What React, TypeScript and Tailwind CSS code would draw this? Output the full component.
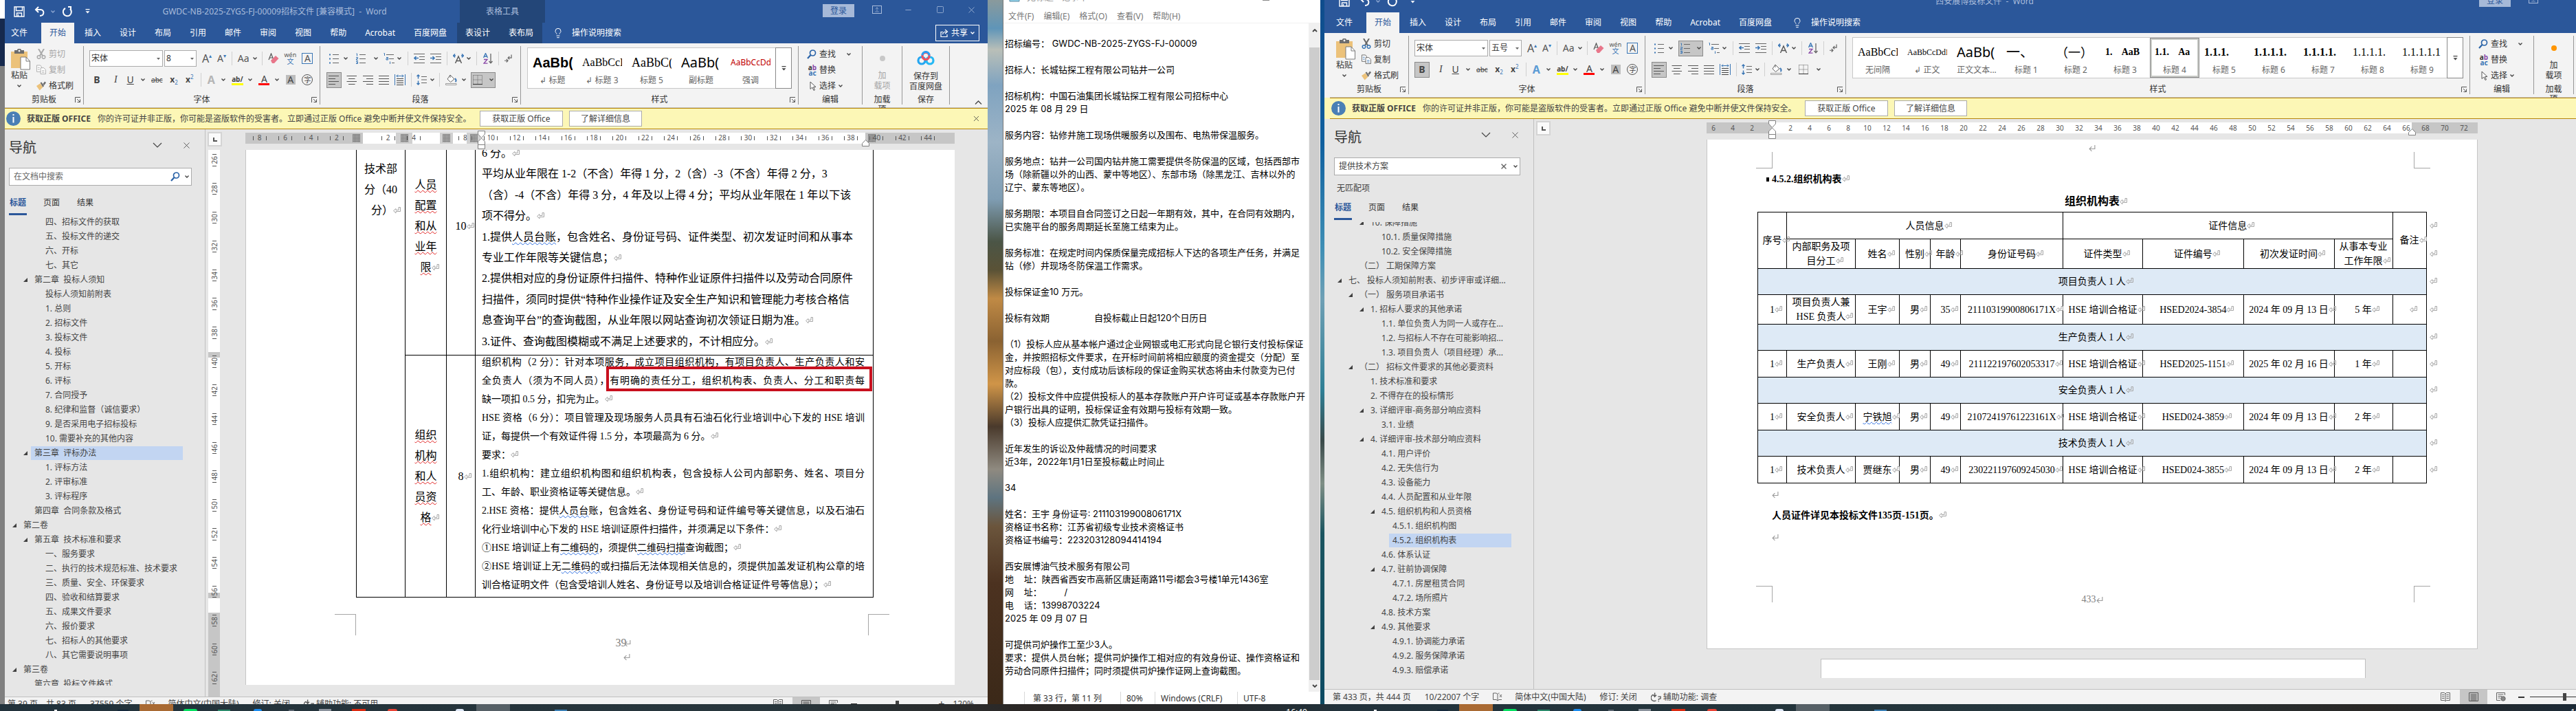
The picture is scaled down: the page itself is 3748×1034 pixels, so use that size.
import React from "react";
import { ArrowUpFromLine, Lightbulb, Minus, Square, X } from "lucide-react";

const UI = "font-['Noto_Sans','Noto_Sans_CJK_SC',sans-serif]";
const SONG = "font-['Liberation_Serif','Noto_Sans_CJK_SC',serif]";

/* ---------- small drawings ---------- */

const Chev = ({ className = "text-[#444]" }: { className?: string }) => (
  <svg viewBox="0 0 6 4" className={`h-1 w-1.5 shrink-0 ${className}`} fill="none" stroke="currentColor" strokeWidth="1.4">
    <path d="M0.5 0.5 L3 3 L5.5 0.5" />
  </svg>
);

const Tri = () => (
  <svg viewBox="0 0 6 6" className="h-1.5 w-1.5" fill="#404040">
    <path d="M6 0 V6 H0 Z" />
  </svg>
);

const Mark = ({ className = "" }: { className?: string }) => (
  <span className={`inline-block w-0 overflow-visible whitespace-nowrap ${className}`}>
    <svg viewBox="0 0 11 10" className="inline-block h-2.5 w-[11px] max-w-none align-baseline" fill="none" stroke="#a6a6a6" strokeWidth="1">
      <path d="M8 0.5 H10.5 V6.5 H4 V9 L0.5 5.5 L4 2.5 V4.5 H8 Z" />
    </svg>
  </span>
);

const SmallMark = () => (
  <svg viewBox="0 0 9 9" className="inline-block h-2.5 w-2.5" fill="none" stroke="#9a9a9a" strokeWidth="1">
    <path d="M8 0 V5 H1 M4 2 L1 5 L4 8" />
  </svg>
);

const Launcher = () => (
  <svg viewBox="0 0 8 8" className="h-2 w-2" fill="none" stroke="#555" strokeWidth="1">
    <path d="M0.5 8 V0.5 H8 M3 3 L7 7 M7.5 3.5 V7.5 H3.5" />
  </svg>
);

const SaveIcon = () => (
  <svg viewBox="0 0 16 16" className="h-4 w-4" fill="none" stroke="#fff" strokeWidth="1.4">
    <path d="M1 1 H15 V15 H1 Z M3.5 1 V6.5 H12.5 V1 M4.5 15 V10 H11.5 V15 M6.5 12 V15" />
  </svg>
);
const UndoIcon = () => (
  <svg viewBox="0 0 16 16" className="h-4 w-4" fill="none" stroke="#fff" strokeWidth="2">
    <path d="M6 1 L2 5 L6 9 M2 5 H9 C15 5 15 14 8 14" />
  </svg>
);
const RedoIcon = () => (
  <svg viewBox="0 0 16 16" className="h-4 w-4" fill="none" stroke="#fff" strokeWidth="2">
    <path d="M5 3 A6 6 0 1 0 12 4 M9 1 H13 V6" />
  </svg>
);
const MoreIcon = ({ color = "#fff" }: { color?: string }) => (
  <svg viewBox="0 0 7 7" className="h-[7px] w-[7px]" fill={color}>
    <path d="M0.5 0 H6.5 V1.2 H0.5 Z M0.5 3.2 H6.5 L3.5 6.5 Z" />
  </svg>
);

const PasteIcon = () => (
  <svg viewBox="0 0 28 31" className="h-[31px] w-7">
    <path d="M0 4 H24 V28 H0 Z" fill="#ecc27a" />
    <path d="M5 2 H9 C9 -1 15 -1 15 2 H19 V7 H5 Z" fill="#6d6d6d" />
    <circle cx="12" cy="3" r="1.4" fill="#f3f3f3" />
    <path d="M14 12 H22 L27.5 18 V30 H14 Z" fill="#fff" stroke="#7a7a7a" />
    <path d="M22 12 V18 H27.5" fill="none" stroke="#7a7a7a" />
  </svg>
);
const CutIcon = ({ c, h }: { c: string; h: string }) => (
  <svg viewBox="0 0 14 15" className="h-[15px] w-3.5" fill="none" strokeWidth="1.5">
    <path d="M3 0 L9 10 M11 0 L5 10" stroke={c} strokeWidth="2" />
    <circle cx="3.5" cy="12" r="2.3" stroke={h} />
    <circle cx="10.5" cy="12" r="2.3" stroke={h} />
  </svg>
);
const CopyIcon = ({ c, h }: { c: string; h: string }) => (
  <svg viewBox="0 0 15 15" className="h-[15px] w-3.5" fill="#fff" stroke={c}>
    <path d="M0.5 0.5 H6 L8 3 V10.5 H0.5 Z" />
    <path d="M6.5 4.5 H11.5 L14.5 7.5 V14 H6.5 Z" />
    <path d="M8.5 9 H12.5 M8.5 11.5 H12.5 M2 4 H5 M2 7 H5" stroke={h} />
  </svg>
);
const BrushIcon = () => (
  <svg viewBox="0 0 15 14" className="h-3.5 w-3.5">
    <path d="M0 7 L6 3 L10 9 L5 14 Z" fill="#ecc27a" />
    <path d="M6 2 L8 1 L12 7 L10 9 Z" fill="#6d6d6d" />
    <path d="M10 4 L13 0 L15 2 L12 6 Z" fill="#6d6d6d" />
  </svg>
);
const EraserIcon = () => (
  <svg viewBox="0 0 16 16" className="h-4 w-4">
    <path d="M1 10 L4.5 1 L8 10 M2.2 7 H6.8" fill="none" stroke="#555" strokeWidth="1.2" />
    <path d="M4 11 L11 4 L15.5 8 L9 15 H6 Z" fill="#e8768a" />
  </svg>
);
const ListIcon = ({ kind }: { kind: "bullet" | "number" | "multi" }) => (
  <svg viewBox="0 0 16 16" className="h-4 w-4 shrink-0" stroke="#666" fill="#3a76b5">
    {kind === "bullet" && (
      <>
        <path d="M5 2.5 H14 M5 8.5 H14 M5 14.5 H14" />
        <path d="M0 1.5 H2 V3.5 H0 Z M0 7.5 H2 V9.5 H0 Z M0 13.5 H2 V15.5 H0 Z" stroke="none" />
      </>
    )}
    {kind === "number" && (
      <>
        <path d="M5 2.5 H14 M5 8.5 H14 M5 14.5 H14" />
        <path d="M0.5 1 H1.5 V4.5 M0 6.5 H2.5 V8.5 H0.5 V10.5 H3 M0 12.5 H2.5 V15.5 H0 M0.5 14 H2.5" fill="none" stroke="#3a76b5" />
      </>
    )}
    {kind === "multi" && (
      <>
        <path d="M4 2.5 H15 M8 8.5 H15 M12 14.5 H16" />
        <path d="M0.5 0.5 H1.5 V4 M4 6.5 H6.5 V10 H4 V8 H6 M9.5 12.5 V16" fill="none" stroke="#3a76b5" />
      </>
    )}
  </svg>
);
const IndentIcon = ({ out }: { out?: boolean }) => (
  <svg viewBox="0 0 16 14" className="h-3.5 w-4" stroke="#666" fill="none">
    <path d="M0 0.5 H16 M8 4.5 H16 M8 8.5 H16 M0 13.5 H16" />
    <path d={out ? "M7 6.5 H1 M3.5 4 L1 6.5 L3.5 9" : "M0 6.5 H6 M3.5 4 L6 6.5 L3.5 9"} stroke="#3a76b5" strokeWidth="1.6" />
  </svg>
);
const AsianIcon = () => (
  <svg viewBox="0 0 16 14" className="h-3.5 w-4 shrink-0" fill="none" stroke="#555" strokeWidth="1.4">
    <path d="M3.5 14 L8 4 L12.5 14 M5.5 10.5 H10.5" />
    <path d="M3 0.5 L0.5 3 L3 5.5 M0.5 3 H4 M13 0.5 L15.5 3 L13 5.5 M15.5 3 H12" stroke="#3a76b5" />
  </svg>
);
const SortIcon = () => (
  <svg viewBox="0 0 14 16" className="h-4 w-3.5" fill="none" strokeWidth="1.3">
    <path d="M0.5 7 L3.5 0.5 L6.5 7 M1.5 5 H5.5" stroke="#3a76b5" />
    <path d="M1 9.5 H6 L1 15.2 H6.5" stroke="#8a4aa8" />
    <path d="M11 1 V14.5 M8.5 12 L11 14.8 L13.5 12" stroke="#666" />
  </svg>
);
const ShowMarksIcon = () => (
  <svg viewBox="0 0 12 13" className="h-[13px] w-[11px]" fill="none" stroke="#666" strokeWidth="1.3">
    <path d="M11 0 V5 H6 M8 2.5 L5.5 5 L8 7.5 M0 9.5 H5 M3 7 L5.5 9.5 L3 12" />
  </svg>
);
const AlignIcon = ({ kind }: { kind: "l" | "c" | "r" | "j" }) => {
  const d = {
    l: "M0 0.5 H15 M0 4.5 H10 M0 8.5 H15 M0 12.5 H10",
    c: "M0.5 0.5 H15 M3 4.5 H12.5 M0.5 8.5 H15 M3 12.5 H12.5",
    r: "M0 0.5 H15 M5 4.5 H15 M0 8.5 H15 M5 12.5 H15",
    j: "M0 0.5 H15 M0 4.5 H15 M0 8.5 H15 M0 12.5 H15",
  }[kind];
  return (
    <svg viewBox="0 0 16 13" className="h-[13px] w-4" stroke="#555" fill="none">
      <path d={d} />
    </svg>
  );
};
const DistributeIcon = () => (
  <svg viewBox="0 0 16 16" className="h-4 w-4" fill="none" stroke="#444">
    <path d="M3 6.5 H13 M3 9.5 H13 M3 12.5 H13 M3 15.5 H13" />
    <path d="M0.5 0 V16 M15.5 0 V16 M3 2.5 H13 M5 0.5 L3 2.5 L5 4.5 M11 0.5 L13 2.5 L11 4.5" stroke="#3a76b5" />
  </svg>
);
const SpacingIcon = () => (
  <svg viewBox="0 0 15 16" className="h-4 w-[15px]" fill="none" stroke="#666">
    <path d="M7 3.5 H15 M7 8 H15 M7 12.5 H15" />
    <path d="M2.5 1 V6.5 M2.5 9.5 V15 M0.5 3 L2.5 1 L4.5 3 M0.5 13 L2.5 15 L4.5 13" stroke="#3a76b5" strokeWidth="1.4" />
  </svg>
);
const ShadeIcon = () => (
  <svg viewBox="0 0 17 16" className="h-4 w-[17px]" fill="none" stroke="#666">
    <path d="M7 1 L13 7 L7.5 11.5 L3 7 Z M7 1 V5" fill="#fff" />
    <path d="M14 6 C16 8 16 10 14.5 11" stroke="#3a76b5" strokeWidth="2" />
    <path d="M0.5 13.5 H16 V15.5 H0.5 Z" fill="#fff" stroke="#999" />
  </svg>
);
const BorderIcon = () => (
  <svg viewBox="0 0 14 14" className="h-3.5 w-3.5" fill="none" stroke="#666">
    <path d="M0.5 0.5 H13.5 V13.5 M0.5 0.5 V13.5 M7 0.5 V13 M0.5 7 H13" strokeDasharray="1 1" />
    <path d="M0 13.5 H14" stroke="#333" />
  </svg>
);
const FindIcon = ({ className = "h-3.5 w-3.5" }: { className?: string }) => (
  <svg viewBox="0 0 14 14" className={className} fill="none" stroke="#2b64a8" strokeWidth="1.7">
    <circle cx="8.5" cy="5" r="4" />
    <path d="M5.5 8 L1 13" strokeWidth="2.2" />
  </svg>
);
const CursorIcon = () => (
  <svg viewBox="0 0 10 14" className="ml-1 h-3.5 w-2.5" fill="#fff" stroke="#555">
    <path d="M1 1 V11.5 L3.8 9 L6 13.5 L7.5 12.8 L5.5 8.5 H9 Z" />
  </svg>
);
const NetdiskIcon = () => (
  <svg viewBox="0 0 26 21" className="h-[21px] w-[26px]" fill="none" strokeWidth="3.2">
    <circle cx="7" cy="14" r="5" stroke="#25a6f0" />
    <circle cx="19" cy="14" r="5" stroke="#25b8f4" />
    <circle cx="13" cy="7.5" r="5" stroke="#ef4f5f" />
    <path d="M8 6.5 A5 5 0 0 1 18 6.5" stroke="#2a9df4" />
  </svg>
);
const InfoIcon = () => (
  <svg viewBox="0 0 21 21" className="h-[21px] w-[21px] shrink-0">
    <circle cx="10.5" cy="10.5" r="10.5" fill="#4a7fb5" />
    <path d="M9.5 4 H11.5 V6 H9.5 Z M9.5 8 H11.5 V16.5 H9.5 Z" fill="#fff" />
  </svg>
);
const ShareIcon = () => (
  <svg viewBox="0 0 12 12" className="h-3 w-3" fill="none" stroke="#fff" strokeWidth="1.2">
    <path d="M4 4.5 H1 V11.5 H10 V8 M3.5 8 C4 5 6 4 9 4 M7 1 L10.5 4 L7 7" />
  </svg>
);
const BookIcon = () => (
  <svg viewBox="0 0 14 13" className="h-[13px] w-3.5" fill="none" stroke="#666">
    <path d="M0.5 1 H5 L7 2.5 V12 L5 10.5 H0.5 Z M7 2.5 L8.5 1 H9.5 M7 12 L9 10.5 H13 M10 3 L13 7 M13 3 L10 7" />
  </svg>
);
const AccessIcon = () => (
  <svg viewBox="0 0 17 14" className="h-3.5 w-4" fill="none" stroke="#555" strokeWidth="1.4">
    <path d="M4 3 A5 5 0 1 0 8 12 M6 0 V6 L8.5 3.5 M6 6 L3.5 3.5 M11 6 H15 V9 L12 10 V11.5 M12 12.5 V14" />
  </svg>
);
const ReadIcon = () => (
  <svg viewBox="0 0 14 14" className="h-3.5 w-3.5" fill="none" stroke="#666">
    <path d="M0.5 0.5 H5.5 L7 2 L8.5 0.5 H13.5 V11.5 H8.5 L7 13 L5.5 11.5 H0.5 Z M7 2 V13 M2 3.5 H5.5 M2 6 H5.5 M2 8.5 H5.5 M8.5 3.5 H12 M8.5 6 H12 M8.5 8.5 H12" />
  </svg>
);
const PrintIcon = () => (
  <svg viewBox="0 0 14 13" className="h-[13px] w-3.5" fill="none" stroke="#555">
    <path d="M0.5 0.5 H13.5 V12.5 H0.5 Z M2.5 3 H11.5 M2.5 5 H11.5 M2.5 7 H11.5 M2.5 9 H11.5 M2.5 11 H11.5" />
  </svg>
);
const WebIcon = () => (
  <svg viewBox="0 0 14 13" className="h-[13px] w-3.5" fill="none" stroke="#666">
    <path d="M12.5 4 V0.5 H0.5 V11.5 H6 M2.5 3 H10.5 M2.5 5.5 H8 M2.5 8 H6" />
    <circle cx="10" cy="9" r="3.2" fill="#8a8a8a" />
  </svg>
);
const Hatch = () => (
  <svg viewBox="0 0 11 12" className="h-3 w-[11px]" stroke="#555" strokeWidth="1">
    <path d="M0 0.5 H11 M0 2.5 H11 M0 4.5 H11 M0 6.5 H11 M0 8.5 H11 M0 10.5 H11 M0.5 0 V12 M2.5 0 V12 M4.5 0 V12 M6.5 0 V12 M8.5 0 V12 M10.5 0 V12" opacity="0.6" />
  </svg>
);
const IndentMarker = () => (
  <svg viewBox="0 0 11 27" className="h-[27px] w-[11px]" fill="#fff" stroke="#808080">
    <path d="M0.5 0.5 H10.5 V5 L5.5 10.5 L0.5 5 Z M5.5 11 L10.5 16 V20.5 H0.5 V16 Z M0.5 20.5 H10.5 V26.5 H0.5 Z" />
  </svg>
);
const RightMarker = () => (
  <svg viewBox="0 0 11 10" className="h-2.5 w-[11px]" fill="#fff" stroke="#808080">
    <path d="M5.5 0.5 L10.5 5.5 V9.5 H0.5 V5.5 Z" />
  </svg>
);

/* ---------- ribbon ---------- */

const Sep = () => <span className="h-5 w-px shrink-0 bg-[#d0d0d0]" />;

const Tool = ({ label, w, on, chev, children }: { label: string; w: string; on?: boolean; chev?: boolean; children: React.ReactNode }) => (
  <button
    aria-label={label}
    className={`flex h-[23px] shrink-0 items-center ${w} ${chev ? "justify-between" : "justify-center"} ${
      on ? "border border-[#8a8a8a] bg-[#c6c6c6] px-0.5" : ""
    }`}
  >
    {children}
    {chev && <Chev />}
  </button>
);

const Group = ({ label, w, launcher, children }: { label: string; w: string; launcher?: boolean; children: React.ReactNode }) => (
  <section className={`my-1 flex shrink-0 flex-col border-r border-[#979797] ${w}`}>
    <div className="flex-1">{children}</div>
    <div className="grid h-3.5 grid-cols-[12px_1fr_12px] items-center">
      <span />
      <span className="text-center leading-[14px] text-[#333]">{label}</span>
      {launcher && (
        <button aria-label={`${label}设置`}>
          <Launcher />
        </button>
      )}
    </div>
  </section>
);

type StyleItem = { sample: string; name: string; cls: string; on?: boolean };
type WordProps = {
  title: string;
  context?: boolean;
  clipped?: boolean;
  size: string;
  styles: StyleItem[];
  children: React.ReactNode;
};

const TABS = ["插入", "设计", "布局", "引用", "邮件", "审阅", "视图", "帮助", "Acrobat", "百度网盘"];

function TitleBar({ title, context, clipped }: { title: string; context?: boolean; clipped?: boolean }) {
  return (
    <header className="flex h-[33px] shrink-0 overflow-hidden text-[#a9bcdb]">
      <div className="flex w-[123px] shrink-0 items-center pl-[13px]">
        <button aria-label="保存"><SaveIcon /></button>
        <button aria-label="撤消" className="ml-3.5"><UndoIcon /></button>
        <Chev className="ml-2 text-[#8fa8d2]" />
        <button aria-label="恢复" className="ml-2.5"><RedoIcon /></button>
        <button aria-label="自定义快速访问工具栏" className="ml-[18px]"><MoreIcon /></button>
      </div>
      <h1 className={`flex-1 self-center whitespace-pre text-center leading-4 ${clipped ? "pl-[110px]" : ""}`}>{title}</h1>
      {context && (
        <div className="mr-[404px] flex w-[124px] shrink-0 items-center justify-center bg-[#234678]">表格工具</div>
      )}
      <div className={`flex shrink-0 items-start overflow-hidden pt-1.5 ${clipped ? "w-[141px]" : "w-60"}`}>
        <button className="h-[19px] w-[46px] shrink-0 bg-[#a6b9d8] leading-[19px] text-[#2b579a]">登录</button>
        <button aria-label="功能区显示选项" className="ml-[26px] mt-0.5 flex h-3 w-3.5 shrink-0 items-center justify-center border border-[#a9bcdb]">
          <ArrowUpFromLine size={8} />
        </button>
        <button aria-label="最小化" className="ml-8 mt-0.5 shrink-0"><Minus size={13} strokeWidth={1.5} /></button>
        <button aria-label="最大化" className="ml-[34px] mt-0.5 shrink-0"><Square size={12} strokeWidth={1.5} /></button>
        <button aria-label="关闭" className="ml-8 mt-px shrink-0"><X size={15} strokeWidth={1.3} /></button>
      </div>
    </header>
  );
}

function TabBar({ context, clipped }: { context?: boolean; clipped?: boolean }) {
  return (
    <nav role="tablist" className="flex h-[30px] shrink-0 whitespace-nowrap text-white">
      <button role="tab" className="w-[53px] pl-[9px] text-left">文件</button>
      <button role="tab" aria-selected className="mr-[3px] bg-[#f3f3f3] px-3 text-[#2b579a]">开始</button>
      {TABS.map((t) => (
        <button role="tab" key={t} className="mr-[3px] px-3">{t}</button>
      ))}
      {context && (
        <div className="flex w-[124px] bg-[#234678]">
          <button role="tab" className="mr-[3px] px-3">表设计</button>
          <button role="tab" className="px-3">表布局</button>
        </div>
      )}
      <button className={`flex items-center gap-3 ${context ? "ml-[15px]" : "ml-3.5"}`}>
        <Lightbulb size={16} strokeWidth={1.5} />
        操作说明搜索
      </button>
      {!clipped && (
        <button className="ml-auto mr-3 mt-[3px] flex h-6 w-16 items-center justify-center gap-1 border border-white">
          <ShareIcon />
          共享
          <Chev className="text-white" />
        </button>
      )}
    </nav>
  );
}

function Ribbon({ clipped, size, styles }: { clipped?: boolean; size: string; styles: StyleItem[] }) {
  const dim = clipped ? "text-[#333]" : "text-[#a6a6a6]";
  const c = clipped ? "#666" : "#aaa";
  const h = clipped ? "#3a76b5" : "#aaa";
  return (
    <div className="flex h-[94px] shrink-0 border-b border-[#c8c8c8] text-[#333]">
      <Group label="剪贴板" w="w-[115px]" launcher>
        <div className="flex pl-[9px]">
          <button className="flex w-7 flex-col items-center pt-1 leading-4">
            <PasteIcon />
            <span className="mr-1">粘贴</span>
            <Chev className="mr-1 mt-[5px] text-[#444]" />
          </button>
          <div className="ml-[9px] flex flex-col">
            <button className={`flex h-[23px] items-center gap-1 ${dim}`}><CutIcon c={c} h={h} />剪切</button>
            <button className={`flex h-[23px] items-center gap-1 ${dim}`}><CopyIcon c={c} h={h} />复制</button>
            <button className="flex h-[23px] items-center gap-1"><BrushIcon />格式刷</button>
          </div>
        </div>
      </Group>

      <Group label="字体" w="w-[344px]" launcher>
        <div className="flex flex-col gap-2 pl-2 pr-[9px] pt-1.5">
          <div className="flex h-6 items-center">
            <label className="relative mr-0.5 h-6 w-[107px]">
              <select aria-label="字体" className="h-6 w-full appearance-none border border-[#ababab] bg-white pl-0.5">
                <option>宋体</option>
              </select>
              <svg viewBox="0 0 5 3" className="absolute right-1 top-[11px] h-[3px] w-[5px]" fill="#666"><path d="M0 0 H5 L2.5 3 Z" /></svg>
            </label>
            <label className="relative h-6 w-[47px]">
              <select aria-label="字号" className="h-6 w-full appearance-none border border-[#ababab] bg-white pl-0.5">
                <option>{size}</option>
              </select>
              <svg viewBox="0 0 5 3" className="absolute right-1 top-[11px] h-[3px] w-[5px]" fill="#666"><path d="M0 0 H5 L2.5 3 Z" /></svg>
            </label>
            <div className="ml-2 flex flex-1 items-center justify-between text-[#555]">
              <Tool label="增大字号" w="w-3.5"><span className="text-base">A</span><span className="-mt-2 text-[8px] text-[#3a76b5]">▴</span></Tool>
              <Tool label="减小字号" w="w-3.5"><span className="text-sm">A</span><span className="-mt-2 text-[8px] text-[#3a76b5]">▾</span></Tool>
              <Sep />
              <Tool label="更改大小写" w="w-7" chev><span className="text-sm">Aa</span></Tool>
              <Sep />
              <Tool label="清除格式" w="w-4"><EraserIcon /></Tool>
              <Tool label="拼音指南" w="w-[18px]">
                <span className="flex flex-col items-center"><span className="text-[9px] leading-[8px]">wén</span><span className="text-[10px] leading-[11px] text-[#3a76b5]">文</span></span>
              </Tool>
              <Tool label="字符边框" w="w-[17px]"><span className="flex h-4 w-4 items-center justify-center border border-[#3a76b5] text-sm leading-4">A</span></Tool>
            </div>
          </div>
          <div className="flex h-[22px] items-center justify-between text-sm text-[#444]">
            <Tool label="加粗" w="w-[22px]" on={clipped}><b>B</b></Tool>
            <Tool label="倾斜" w="w-3.5"><i className="font-['Liberation_Serif',serif]">I</i></Tool>
            <Tool label="下划线" w="w-[26px]" chev><span className="underline">U</span></Tool>
            <Tool label="删除线" w="w-[17px]"><span className="text-[10px] line-through">abc</span></Tool>
            <Tool label="下标" w="w-3.5"><b className="text-xs">x</b><span className="mt-2 text-[8px] text-[#3a76b5]">2</span></Tool>
            <Tool label="上标" w="w-[13px]"><b className="text-xs">x</b><span className="-mt-2 text-[8px] text-[#3a76b5]">2</span></Tool>
            <Sep />
            <Tool label="文本效果" w="w-[26px]" chev>
              <span className={`text-base font-bold leading-4 ${clipped ? "text-[#5b9bd5]" : "text-[#b5b5b5]"}`}>A</span>
            </Tool>
            <Tool label="突出显示" w="w-[30px]" chev>
              <span className="border-b-[3px] border-[#ffff00] text-[10px] font-bold leading-[12px]">ab/</span>
            </Tool>
            <Tool label="字体颜色" w="w-[30px]" chev><span className="w-4 border-b-[3px] border-[#ff0000] text-center leading-[12px]">A</span></Tool>
            <Tool label="字符底纹" w="w-3.5"><span className="w-3.5 bg-[#bdbdbd] text-center leading-[14px]">A</span></Tool>
            <Tool label="带圈字符" w="w-[17px]"><span className="flex h-4 w-4 items-center justify-center rounded-full border border-[#555] text-[10px] leading-[10px]">字</span></Tool>
          </div>
        </div>
      </Group>

      <Group label="段落" w="w-[292px]" launcher>
        <div className="flex flex-col gap-2 pt-1.5">
          <div className="ml-[13px] mr-3 flex h-6 items-center justify-between">
            <Tool label="项目符号" w="w-[27px]" chev><ListIcon kind="bullet" /></Tool>
            <Tool label="编号" w="w-9" chev on={clipped}>
              {clipped ? <ListIcon kind="number" /> : <span className="pl-1"><ListIcon kind="number" /></span>}
            </Tool>
            <Tool label="多级列表" w="w-[26px]" chev><ListIcon kind="multi" /></Tool>
            <Sep />
            <Tool label="减少缩进量" w="w-4"><IndentIcon out /></Tool>
            <Tool label="增加缩进量" w="w-4"><IndentIcon /></Tool>
            <Sep />
            <Tool label="中文版式" w="w-[26px]" chev><AsianIcon /></Tool>
            <Sep />
            <Tool label="排序" w="w-3.5"><SortIcon /></Tool>
            <Sep />
            <Tool label="显示编辑标记" w="w-[11px]"><ShowMarksIcon /></Tool>
          </div>
          <div className="ml-[9px] mr-9 flex h-[22px] items-center justify-between">
            <Tool label="左对齐" w="w-[22px]" on><AlignIcon kind="l" /></Tool>
            <Tool label="居中" w="w-4"><AlignIcon kind="c" /></Tool>
            <Tool label="右对齐" w="w-4"><AlignIcon kind="r" /></Tool>
            <Tool label="两端对齐" w="w-4"><AlignIcon kind="j" /></Tool>
            <Tool label="分散对齐" w="w-4"><DistributeIcon /></Tool>
            <Sep />
            <Tool label="行距" w="w-[26px]" chev><SpacingIcon /></Tool>
            <Sep />
            <Tool label="底纹" w="w-[30px]" chev><ShadeIcon /></Tool>
            <Tool label="边框" w="w-9" chev on={!clipped}>
              {clipped ? <span className="pl-1"><BorderIcon /></span> : <BorderIcon />}
            </Tool>
          </div>
        </div>
      </Group>

      <Group label="样式" w="min-w-0 shrink" launcher>
        <div className="ml-[9px] mr-[9px] mt-0.5 flex h-[60px] border border-[#c8c8c8] bg-white">
          {styles.map((s) => (
            <button
              key={s.name}
              className={`flex w-[72px] shrink-0 flex-col items-center overflow-hidden ${s.on ? "border-[3px] border-[#c9cbc7] outline outline-1 -outline-offset-1 outline-[#8a8a8a]" : "p-[3px]"}`}
            >
              <span className={`flex h-9 w-[58px] items-center overflow-hidden whitespace-pre text-black ${s.cls}`}>{s.sample}</span>
              <span className="whitespace-nowrap leading-4 text-[#666]">{s.name}</span>
            </button>
          ))}
          <button aria-label="更多样式" className="-my-px -mr-px flex w-6 shrink-0 items-center justify-center border border-[#8a8a8a]">
            <MoreIcon color="#444" />
          </button>
        </div>
      </Group>

      <Group label="编辑" w="w-[93px]">
        <div className="flex flex-col pl-3">
          <button className="flex h-[23px] items-center gap-1"><FindIcon />查找<span className="ml-3"><Chev /></span></button>
          <button className="flex h-[23px] items-center gap-0.5">
            <span className="flex w-4 flex-col text-[10px] font-bold leading-[8px]"><span>a<span className="text-[#8a4aa8]">b</span></span><span className="text-[#3a76b5]">ac</span></span>
            替换
          </button>
          <button className="flex h-[23px] items-center gap-1"><CursorIcon />选择<Chev /></button>
        </div>
      </Group>

      <Group label="加载项" w="w-[58px]">
        <button className={`flex w-full flex-col items-center pt-3.5 leading-[15px] ${dim}`}>
          <span className={`mb-[13px] h-2 w-2 rounded-full ${clipped ? "bg-[#ff9500]" : "bg-[#c8c8c8]"}`} />
          <span>加</span>
          <span>载项</span>
        </button>
      </Group>

      {!clipped && (
        <>
          <Group label="保存" w="w-[69px]">
            <button className="flex w-full flex-col items-center pt-[7px] leading-[15px]">
              <NetdiskIcon />
              <span className="mt-2">保存到</span>
              <span>百度网盘</span>
            </button>
          </Group>
          <button aria-label="折叠功能区" className="mb-1 ml-auto mr-2 self-end">
            <svg viewBox="0 0 11 6" className="h-1.5 w-[11px]" fill="none" stroke="#444" strokeWidth="1.3"><path d="M1 5.5 L5.5 1 L10 5.5" /></svg>
          </button>
        </>
      )}
    </div>
  );
}

function Notice({ clipped }: { clipped?: boolean }) {
  return (
    <aside className="flex h-[31px] shrink-0 items-center whitespace-nowrap border-y border-[#b8860b] bg-[#fcf7b6] pl-0.5 text-[#444]">
      <InfoIcon />
      <b className="ml-[9px]">获取正版 OFFICE</b>
      <span className="ml-2.5 w-[556px]">你的许可证并非正版，你可能是盗版软件的受害者。立即通过正版 Office 避免中断并使文件保持安全。</span>
      <button className="h-[23px] w-[121px] border border-[#ababab] bg-white">获取正版 Office</button>
      <button className="ml-[9px] h-[23px] w-[106px] border border-[#ababab] bg-white">了解详细信息</button>
      {!clipped && (
        <button aria-label="关闭消息" className="ml-auto mr-2.5"><X size={13} strokeWidth={1.5} /></button>
      )}
    </aside>
  );
}

function WordTop({ title, context, clipped, size, styles, children }: WordProps) {
  return (
    <div className={`flex h-full flex-col bg-[#e6e6e6] text-xs ${UI}`}>
      <div className={`shrink-0 bg-[#2b579a] ${clipped ? "pl-2" : ""}`}>
        <TitleBar title={title} context={context} clipped={clipped} />
        <TabBar context={context} clipped={clipped} />
      </div>
      <div className={`shrink-0 bg-[#f3f3f3] ${clipped ? "pl-2" : ""}`}>
        <Ribbon clipped={clipped} size={size} styles={styles} />
      </div>
      <div className={clipped ? "shrink-0 bg-[#fcf7b6] pl-2" : "shrink-0"}>
        <Notice clipped={clipped} />
      </div>
      {children}
    </div>
  );
}

/* ---------- navigation pane ---------- */

type NavItem = [level: number, text: string, open?: boolean];

const INDENT = ["pl-[11px]", "pl-[27px]", "pl-[43px]", "pl-[59px]", "pl-[75px]"];

function NavPane({ items, selected, query, right }: { items: NavItem[]; selected: string; query?: boolean; right: string }) {
  return (
    <div className={`flex shrink-0 flex-col border-r border-[#c0c0c0] ${query ? "ml-2 w-[297px]" : "w-[292px]"}`}>
      <div className="ml-1.5 mt-[13px] flex h-7 items-center text-[#444]">
        <h2 className="flex-1 text-xl leading-7 text-[#333]">导航</h2>
        <button aria-label="任务窗格选项" className="mb-2">
          <svg viewBox="0 0 14 8" className="h-2 w-3.5" fill="none" stroke="#444" strokeWidth="1.2"><path d="M1 1 L7 7 L13 1" /></svg>
        </button>
        <button aria-label="关闭" className={`mb-2 ml-7 ${right}`}><X size={15} strokeWidth={1.3} /></button>
      </div>
      <label className={`ml-1.5 mt-[15px] flex h-[26px] shrink-0 items-center border border-[#ababab] bg-white ${right}`}>
        <input
          aria-label="在文档中搜索"
          placeholder="在文档中搜索"
          defaultValue={query ? "提供技术方案" : ""}
          className="min-w-0 flex-1 pl-1.5 text-[#444] outline-none placeholder:text-[#666]"
        />
        {query ? <X size={12} strokeWidth={3} color="#666" className="mr-2" /> : <FindIcon className="mr-1.5 h-3.5 w-4" />}
        <Chev className="mr-[3px] text-[#444]" />
      </label>
      {query && <p className="ml-2.5 mt-2.5 h-[18px] leading-[18px] text-[#444]">无匹配项</p>}
      <div role="tablist" className={`ml-1.5 flex h-[30px] shrink-0 items-start gap-[23px] text-[#333] ${query ? "mt-[7px]" : "mt-[13px]"}`}>
        <button role="tab" aria-selected className="h-[30px] border-b-[3px] border-[#2b579a] px-px pb-1 font-bold text-[#2b579a]">标题</button>
        <button role="tab" className="h-[30px] px-px pb-[7px]">页面</button>
        <button role="tab" className="h-[30px] px-px pb-[7px]">结果</button>
      </div>
      <div className={`mb-4 min-h-0 flex-1 overflow-hidden ${query ? "mt-[3px]" : ""}`}>
        <ul className={query ? "-mt-2.5" : "-mt-px"}>
          {items.map(([lv, text, open], i) => (
            <li key={i} className={`flex h-[21px] items-center ${INDENT[lv]}`}>
              <span className="flex w-[11px] shrink-0">{open && <Tri />}</span>
              <a
                href="#"
                className={`mr-8 h-5 flex-1 whitespace-pre pl-[5px] leading-5 text-[#444] ${text === selected ? "bg-[#c2d5f2]" : ""}`}
              >
                {text}
              </a>
            </li>
          ))}
        </ul>
      </div>
    </div>
  );
}

const NAV_A: NavItem[] = [
  [2, "四、招标文件的获取"], [2, "五、投标文件的递交"], [2, "六、开标"], [2, "七、其它"],
  [1, "第二章  投标人须知", true], [2, "投标人须知前附表"], [2, "1. 总则"], [2, "2. 招标文件"], [2, "3. 投标文件"],
  [2, "4. 投标"], [2, "5. 开标"], [2, "6. 评标"], [2, "7. 合同授予"], [2, "8. 纪律和监督（诚信要求）"],
  [2, "9. 是否采用电子招标投标"], [2, "10. 需要补充的其他内容"], [1, "第三章  评标办法", true],
  [2, "1. 评标方法"], [2, "2. 评审标准"], [2, "3. 评标程序"], [1, "第四章  合同条款及格式"], [0, "第二卷", true],
  [1, "第五章  技术标准和要求", true], [2, "一、服务要求"], [2, "二、执行的技术规范标准、技术要求"],
  [2, "三、质量、安全、环保要求"], [2, "四、验收和结算要求"], [2, "五、成果文件要求"], [2, "六、报价要求"],
  [2, "七、招标人的其他要求"], [2, "八、其它需要说明事项"], [0, "第三卷", true], [1, "第六章  投标文件格式"],
];

const NAV_B: NavItem[] = [
  [2, "10. 保障措施", true], [3, "10.1. 质量保障措施"], [3, "10.2. 安全保障措施"], [1, "（二） 工期保障方案"],
  [0, "七、 投标人须知前附表、初步评审或详细...", true], [1, "（一） 服务项目承诺书", true],
  [2, "1. 招标人要求的其他承诺", true], [3, "1.1. 单位负责人为同一人或存在..."], [3, "1.2. 与招标人不存在可能影响招..."],
  [3, "1.3. 项目负责人（项目经理）承..."], [1, "（二） 招标文件要求的其他必要资料", true], [2, "1. 技术标准和要求"],
  [2, "2. 不得存在的投标情形"], [2, "3. 详细评审-商务部分响应资料", true], [3, "3.1. 业绩"],
  [2, "4. 详细评审-技术部分响应资料", true], [3, "4.1. 用户评价"], [3, "4.2. 无失信行为"], [3, "4.3. 设备能力"],
  [3, "4.4. 人员配置和从业年限"], [3, "4.5. 组织机构和人员资格", true], [4, "4.5.1. 组织机构图"], [4, "4.5.2. 组织机构表"],
  [3, "4.6. 体系认证"], [3, "4.7. 驻前协调保障", true], [4, "4.7.1. 房屋租赁合同"], [4, "4.7.2. 场所照片"],
  [3, "4.8. 技术方案"], [3, "4.9. 其他要求", true], [4, "4.9.1. 协调能力承诺"], [4, "4.9.2. 服务保障承诺"], [4, "4.9.3. 赔偿承诺"],
];

/* ---------- status bar ---------- */

function StatusBar({ pages, words, access, zoom, pad }: { pages: string; words: string; access: string; zoom?: string; pad: string }) {
  return (
    <footer className={`flex shrink-0 items-center whitespace-nowrap border-t border-[#c0c0c0] bg-[#f3f3f3] text-[#444] ${pad}`}>
      <span>{pages}</span>
      <span className="ml-5">{words}</span>
      <span className="ml-5"><BookIcon /></span>
      <span className="ml-[18px]">简体中文(中国大陆)</span>
      <span className="ml-5">修订: 关闭</span>
      <button className="ml-5 flex items-center gap-0.5"><AccessIcon />{access}</button>
      <div className="ml-auto flex items-center self-stretch">
        <button aria-label="阅读视图" className="mr-3.5"><ReadIcon /></button>
        <button aria-label="页面视图" className="flex w-10 items-center justify-center self-stretch bg-[#c6c6c6]"><PrintIcon /></button>
        <button aria-label="Web 版式视图" className="ml-[13px] mr-[18px]"><WebIcon /></button>
        <span className="h-0.5 w-[9px] bg-[#333]" />
        <span className={`relative ml-2 h-px bg-[#333] ${zoom ? "w-[104px]" : "w-[67px]"}`}>
          <span className={`absolute -top-[5px] h-[11px] w-[5px] bg-[#444] ${zoom ? "left-12" : "left-[48px]"}`} />
        </span>
        {zoom && (
          <>
            <span className="ml-1.5 text-base">+</span>
            <span className="ml-3 mr-5">{zoom}</span>
          </>
        )}
      </div>
    </footer>
  );
}

/* ---------- left document ---------- */

function Rich({ text }: { text: string }) {
  return (
    <>
      {text.split(/(~[^~]+~|↵)/).map((p, i) =>
        p.startsWith("~") ? (
          <span key={i} className="underline decoration-[#2f6fe0] decoration-wavy decoration-1 underline-offset-2">{p.slice(1, -1)}</span>
        ) : p === "↵" ? (
          <Mark key={i} />
        ) : (
          p
        ),
      )}
    </>
  );
}

const TOP_LINES = [
  "6 分。↵",
  "平均从业年限在 1-2（不含）年得 1 分，2（含）-3（不含）年得 2 分，3",
  "（含）-4（不含）年得 3 分，4 年及以上得 4 分；平均从业年限在 1 年以下该",
  "项不得分。↵",
  "1.提供~人员台账~，包含姓名、身份证号码、证件类型、初次发证时间和从事本",
  "专业工作年限等关键信息；↵",
  "2.提供相对应的身份证原件扫描件、特种作业证原件扫描件以及劳动合同原件",
  "扫描件，须同时提供“特种作业操作证及安全生产知识和管理能力考核合格信",
  "息查询平台”的查询截图，从业年限以网站查询初次领证日期为准。↵",
  "3.证件、查询截图模糊或不满足上述要求的，不计相应分。↵",
];

const BOTTOM_LINES = [
  "组织机构（2 分）：针对本项服务，成立项目组织机构，有项目负责人、生产负责人和安",
  "全负责人（须为不同人员），有明确的责任分工，组织机构表、负责人、分工和职责每",
  "缺一项扣 0.5 分，扣完为止。↵",
  "HSE 资格（6 分）：项目管理及现场服务人员具有石油石化行业培训中心下发的 HSE 培训",
  "证，每提供一个有效证件得 1.5 分，本项最高为 6 分。↵",
  "要求：↵",
  "1.组织机构：建立组织机构图和组织机构表，包含投标人公司内部职务、姓名、项目分",
  "工、年龄、职业资格证等关键信息。↵",
  "2.HSE 资格：提供~人员台~账，包含姓名、身份证号码和证件编号等关键信息，以及石油石",
  "化行业培训中心下发的 HSE 培训证原件扫描件，并须满足以下条件：↵",
  "①HSE 培训证上有~二维码的~，须提供~二维码扫描~查询截图；↵",
  "②HSE 培训证上无~二维码的~或扫描后无法体现相关信息的，须提供加盖发证机构公章的培",
  "训合格证明文件（包含受培训人姓名、身份证号以及培训合格证证件号等信息）；↵",
];

const Topic = ({ parts }: { parts: string[] }) => (
  <div className="flex flex-col text-base leading-[30px]">
    {parts.map((p, i) => (
      <span key={p} className="flex justify-center">
        <span className="underline decoration-[#e02020] decoration-wavy decoration-1 underline-offset-2">{p}</span>
        {i === parts.length - 1 && <Mark />}
      </span>
    ))}
  </div>
);

const H_LABELS = ["8", "6", "4", "2", "", "2", "4", "", "8", "10", "12", "14", "16", "18", "20", "22", "24", "26", "28", "30", "32", "34", "36", "38", "40", "42", "44"];
const V_LABELS = ["26", "28", "30", "32", "34", "36", "38", "40", "42", "44", "46", "48", "50", "52", "54", "56", "58", "60", "62"];

const TabSelector = () => (
  <button aria-label="制表符" className="flex h-[21px] w-[21px] items-center justify-center border-2 border-[#d4d4d4] bg-[#fafafa]">
    <svg viewBox="0 0 6 6" className="h-1.5 w-1.5" stroke="#555" strokeWidth="2" fill="none"><path d="M1 0 V5 H6" /></svg>
  </button>
);

function LeftDocument() {
  return (
    <div className="flex min-h-0 flex-1">
      <NavPane items={NAV_A} selected="第三章  评标办法" right="mr-[19px]" />
      <div className="flex w-[22px] shrink-0 flex-col pl-[3px] pt-1">
        <TabSelector />
        <div className="relative ml-px mt-[5px] w-[17px] flex-1 overflow-hidden text-[10px] text-[#555]">
          <div className="absolute inset-0 flex flex-col">
            <span className="h-[294px] bg-white" />
            <span className="h-2 bg-[#c6c6c6]" />
            <span className="h-[342px] bg-white" />
            <span className="h-2 bg-[#c6c6c6]" />
            <span className="h-[21px] bg-white" />
            <span className="flex-1 bg-[#c6c6c6]" />
          </div>
          <div className="absolute inset-x-0 -top-1.5 flex h-[795px] flex-col">
            {V_LABELS.map((n) => (
              <span key={n} className="flex flex-1 flex-col items-center justify-center gap-0.5 leading-3">
                <i className="h-px w-1.5 bg-[#555]" />
                <span className="[writing-mode:sideways-lr]">{n}</span>
                <i className="h-px w-1.5 bg-[#555]" />
              </span>
            ))}
          </div>
        </div>
      </div>
      <div className="ml-9 mr-12 flex min-w-0 flex-1 flex-col pt-[5px]">
        <div className="relative h-4 shrink-0">
          <div className="absolute inset-0 flex">
            <span className="flex w-[171px] items-center justify-end bg-[#c6c6c6] pr-1"><Hatch /></span>
            <span className="w-12 bg-white" />
            <span className="flex w-6 items-center justify-center bg-[#d0d0d0]"><Hatch /></span>
            <span className="w-10 bg-white" />
            <span className="flex w-[19px] items-center justify-center bg-[#d0d0d0]"><Hatch /></span>
            <span className="w-5 bg-white" />
            <span className="flex w-5 items-center justify-center bg-[#d0d0d0]"><Hatch /></span>
            <span className="flex-1 bg-white" />
            <span className="flex w-[130px] items-center bg-[#c6c6c6] pl-1"><Hatch /></span>
          </div>
          <div className="absolute inset-y-0 left-0.5 right-[20px] flex text-[10px] text-[#555]">
            {H_LABELS.map((n, i) => (
              <span key={i} className="flex flex-1 items-center justify-center">
                {n && (
                  <>
                    <i className="h-1.5 w-px bg-[#555]" />
                    <span className="w-[18px] text-center">{n}</span>
                    <i className="h-1.5 w-px bg-[#555]" />
                  </>
                )}
              </span>
            ))}
          </div>
          <span className="absolute -top-[3px] left-[338px]"><IndentMarker /></span>
          <span className="absolute right-[124px] top-2.5"><RightMarker /></span>
        </div>
        <article className={`mb-[17px] mt-[9px] min-h-0 flex-1 overflow-hidden border-l border-[#c6c6c6] bg-white text-black ${SONG}`}>
          <div className="-mt-[78px] pl-[160px] pr-[118px]">
            <table className="w-full table-fixed border-collapse">
              <colgroup>
                <col className="w-[71px]" />
                <col className="w-[60px]" />
                <col className="w-[42px]" />
                <col />
              </colgroup>
              <tbody>
                <tr className="h-[376px]">
                  <td rowSpan={2} className="border border-black pt-[90px] text-center align-top text-base leading-[30px]">
                    <div>技术部</div>
                    <div>分（40</div>
                    <div className="pl-1">分）<Mark /></div>
                  </td>
                  <td className="border border-black"><Topic parts={["人员", "配置", "和从", "业年", "限"]} /></td>
                  <td className="border border-black text-center text-base">10<Mark /></td>
                  <td className="border border-black pb-1 pl-[9px] align-bottom">
                    <div className="flex h-[304px] flex-col whitespace-nowrap text-base leading-[30px]">
                      {TOP_LINES.map((l) => (
                        <p key={l} className="flex-1"><Rich text={l} /></p>
                      ))}
                    </div>
                  </td>
                </tr>
                <tr className="h-[352px]">
                  <td className="border border-black"><Topic parts={["组织", "机构", "和人", "员资", "格"]} /></td>
                  <td className="border border-black text-center text-base">8<Mark /></td>
                  <td className="relative border border-black pl-[9px] pr-3 align-top">
                    <div className="-mt-1 whitespace-nowrap text-sm leading-[27px]">
                      {BOTTOM_LINES.map((l) => (
                        <p key={l} className={l.endsWith("↵") ? "" : "text-justify [text-align-last:justify]"}><Rich text={l} /></p>
                      ))}
                    </div>
                    <span className="absolute left-[190px] right-px top-4 h-9 border-4 border-[#c8101e]" />
                  </td>
                </tr>
              </tbody>
            </table>
          </div>
          <div className="ml-[129px] mr-[95px] mt-6 flex justify-between">
            <span className="h-[31px] w-[31px] border-r border-t border-[#a6a6a6]" />
            <span className="h-[31px] w-[31px] border-l border-t border-[#a6a6a6]" />
          </div>
          <div className="mt-[3px] pl-[184px] pr-[118px] text-center text-base leading-4 text-[#808080]">
            <p>39<span className="-ml-1"><SmallMark /></span></p>
            <p className="pl-2.5 leading-6"><SmallMark /></p>
          </div>
        </article>
      </div>
    </div>
  );
}

/* ---------- right document ---------- */

type Person = { role: string[]; name: string; flag?: boolean; age: string; id: string; cert: string; date: string; years: string; note?: boolean };

const STAFF: { head: string; p: Person }[] = [
  { head: "项目负责人 1 人", p: { role: ["项目负责人兼", "HSE 负责人"], name: "王宇", age: "35", id: "21110319900806171X", cert: "HSED2024-3854", date: "2024 年 09 月 13 日", years: "5 年", note: true } },
  { head: "生产负责人 1 人", p: { role: ["生产负责人"], name: "王刚", age: "49", id: "211122197602053317", cert: "HSED2025-1151", date: "2025 年 02 月 16 日", years: "1 年" } },
  { head: "安全负责人 1 人", p: { role: ["安全负责人"], name: "宁铁旭", flag: true, age: "49", id: "21072419761223161X", cert: "HSED024-3859", date: "2024 年 09 月 13 日", years: "2 年" } },
  { head: "技术负责人 1 人", p: { role: ["技术负责人"], name: "贾继东", age: "49", id: "230221197609245030", cert: "HSED024-3855", date: "2024 年 09 月 13 日", years: "2 年" } },
];

const Cell = ({ children }: { children?: React.ReactNode }) => <td className="border border-black p-0">{children}</td>;
const Head = ({ children, ...rest }: { children: React.ReactNode; colSpan?: number; rowSpan?: number }) => (
  <th className="border border-black p-0 font-normal" {...rest}>{children}<Mark /></th>
);
const RowEnd = () => <td className="p-0 pl-1 text-left"><Mark /></td>;

const R_LABELS = ["6", "4", "2", "", ...Array.from({ length: 36 }, (_, i) => String((i + 1) * 2))];

function RightDocument() {
  return (
    <div className="flex min-h-0 flex-1">
      <NavPane items={NAV_B} selected="4.5.2. 组织机构表" query right="mr-[19px]" />
      <div className="flex w-[23px] shrink-0 flex-col pl-[3px] pt-[3px]"><TabSelector /></div>
      <div className="ml-[228px] mr-[143px] flex min-w-0 flex-1 flex-col overflow-visible pt-[5px]">
        <div className="relative h-4 shrink-0">
          <div className="absolute inset-0 flex">
            <span className="w-[95px] bg-[#c6c6c6]" />
            <span className="flex-1 bg-white" />
            <span className="w-24 bg-[#c6c6c6]" />
          </div>
          <div className="absolute inset-y-0 -left-1 right-1.5 flex text-[10px] leading-4 text-[#555]">
            {R_LABELS.map((n, i) => (
              <span key={i} className="flex-1 text-center">{n}</span>
            ))}
          </div>
          <span className="absolute -top-[3px] left-[90px]"><IndentMarker /></span>
          <span className="absolute right-[90px] top-[9px]"><RightMarker /></span>
        </div>
        <article className={`mt-[9px] h-[741px] shrink-0 border border-t-0 border-[#c6c6c6] bg-white text-sm text-black ${SONG}`}>
          <div className="pt-1.5 text-center leading-3"><SmallMark /></div>
          <div className="ml-[71px] mr-[68px] flex justify-between">
            <span className="h-6 w-6 border-b border-r border-[#a6a6a6]" />
            <span className="h-6 w-6 border-b border-l border-[#a6a6a6]" />
          </div>
          <h3 className="ml-[86px] mt-1.5 flex items-center font-bold leading-5">
            <span className="mr-1 h-1.5 w-1 bg-black" />4.5.2.组织机构表<Mark />
          </h3>
          <h2 className="mt-3 pl-[74px] pr-[74px] text-center text-base font-bold leading-5">组织机构表<Mark /></h2>
          <div className="ml-[73px] mr-[58px] mt-[5px]">
            <table className="w-full table-fixed border-collapse whitespace-nowrap text-center leading-[21px]">
              <colgroup>
                <col className="w-[42px]" /><col className="w-[100px]" /><col className="w-16" /><col className="w-[45px]" />
                <col className="w-11" /><col className="w-[149px]" /><col className="w-[116px]" /><col />
                <col className="w-[132px]" /><col className="w-[85px]" /><col className="w-[49px]" /><col className="w-4" />
              </colgroup>
              <thead>
                <tr className="h-[39px]">
                  <Head rowSpan={2}>序号</Head>
                  <Head colSpan={5}>人员信息</Head>
                  <Head colSpan={4}>证件信息</Head>
                  <Head rowSpan={2}>备注</Head>
                  <RowEnd />
                </tr>
                <tr className="h-[42px]">
                  <Head>内部职务及项<br />目分工</Head>
                  <Head>姓名</Head>
                  <Head>性别</Head>
                  <Head>年龄</Head>
                  <Head>身份证号码</Head>
                  <Head>证件类型</Head>
                  <Head>证件编号</Head>
                  <Head>初次发证时间</Head>
                  <Head>从事本专业<br />工作年限</Head>
                  <RowEnd />
                </tr>
              </thead>
              <tbody>
                {STAFF.map(({ head, p }) => (
                  <React.Fragment key={head}>
                    <tr className="h-[38px]">
                      <td colSpan={11} className="border border-black bg-[#deeaf6] p-0">{head}<Mark /></td>
                      <RowEnd />
                    </tr>
                    <tr className={p.role.length > 1 ? "h-[43px]" : "h-[39px]"}>
                      <Cell>1<Mark /></Cell>
                      <Cell>{p.role.map((r) => <div key={r}>{r}{r === p.role[p.role.length - 1] && <Mark />}</div>)}</Cell>
                      <Cell><Rich text={p.flag ? `~${p.name}~` : p.name} /><Mark /></Cell>
                      <Cell>男<Mark /></Cell>
                      <Cell>{p.age}<Mark /></Cell>
                      <Cell>{p.id}<Mark /></Cell>
                      <Cell>HSE 培训合格证<Mark /></Cell>
                      <Cell>{p.cert}<Mark /></Cell>
                      <Cell>{p.date}<Mark /></Cell>
                      <Cell>{p.years}<Mark /></Cell>
                      <Cell>{p.note && <Mark />}</Cell>
                      <RowEnd />
                    </tr>
                  </React.Fragment>
                ))}
              </tbody>
            </table>
          </div>
          <div className="ml-[94px]">
            <p className="mt-1.5 h-5 leading-5"><SmallMark /></p>
            <p className="mt-[11px] font-bold leading-5">人员证件详见本投标文件135页-151页。<Mark /></p>
            <p className="mt-[11px] h-5 leading-5"><SmallMark /></p>
          </div>
          <div className="ml-[71px] mr-[68px] mt-[61px] flex justify-between">
            <span className="h-6 w-6 border-r border-t border-[#a6a6a6]" />
            <span className="h-6 w-6 border-l border-t border-[#a6a6a6]" />
          </div>
          <p className="-mt-3 text-center leading-4 text-[#808080]">433<SmallMark /></p>
        </article>
        <div className="ml-[166px] mr-[163px] mt-3.5 h-7 shrink-0 border border-b-0 border-[#c0c0c0] bg-white" />
      </div>
    </div>
  );
}

/* ---------- notepad ---------- */

const NOTE = `招标编号： GWDC-NB-2025-ZYGS-FJ-00009

招标人：长城钻探工程有限公司钻井一公司

招标机构：中国石油集团长城钻探工程有限公司招标中心
2025 年 08 月 29 日

服务内容：钻修井施工现场供暖服务以及围布、电热带保温服务。

服务地点：钻井一公司国内钻井施工需要提供冬防保温的区域，包括西部市
场（除新疆以外的山西、蒙中等地区）、东部市场（除黑龙江、吉林以外的
辽宁、蒙东等地区）。

服务期限：本项目自合同签订之日起一年期有效，其中，在合同有效期内，
已实施平台的服务周期延长至施工结束为止。

服务标准：在规定时间内保质保量完成招标人下达的各项生产任务，并满足
钻（修）井现场冬防保温工作需求。

投标保证金10 万元。

投标有效期　　　　　自投标截止日起120个日历日

（1）投标人应从基本帐户通过企业网银或电汇形式向昆仑银行支付投标保证
金，并按照招标文件要求，在开标时间前将相应额度的资金提交（分配）至
对应标段（包），支付成功后该标段的保证金购买状态将由未付款变为已付
款。
（2）投标文件中应提供投标人的基本存款账户开户许可证或基本存款账户开
户银行出具的证明，投标保证金有效期与投标有效期一致。
（3）投标人应提供汇款凭证扫描件。

近年发生的诉讼及仲裁情况的时间要求
近3年，2022年1月1日至投标截止时间止

34

姓名：王宇 身份证号: 21110319900806171X
资格证书名称：江苏省初级专业技术资格证书
资格证书编号：223203128094414194

西安展博油气技术服务有限公司
地    址：陕西省西安市高新区唐延南路11号i都会3号楼1单元1436室
网    址：         /
电    话：13998703224
2025 年 09 月 07 日

可提供司炉操作工至少3人。
要求：提供人员台帐；提供司炉操作工相对应的有效身份证、操作资格证和
劳动合同原件扫描件；同时须提供司炉操作证网上查询截图。`;

function Notepad() {
  return (
    <div className={`flex h-full min-w-0 flex-col overflow-hidden border-l border-[#777] bg-white pb-2.5 text-xs ${UI}`}>
      <div className="flex h-[15px] shrink-0 items-end overflow-hidden text-[#999]">
        <div className="-mt-3.5 flex h-5 w-full shrink-0 items-center self-start pl-2">
          <svg viewBox="0 0 16 14" className="h-3.5 w-4"><path d="M1 0 H15 V13 H1 Z" fill="#8fd0e8" stroke="#5a8ca5" /></svg>
          <span className="ml-2.5 text-[13px]">无标题 - 记事本</span>
          <span className="ml-auto mr-[46px] h-2.5 w-2.5 border border-[#888]" />
          <X size={12} strokeWidth={1.3} className="mr-4" />
        </div>
      </div>
      <div className="flex h-[19px] shrink-0 gap-3.5 border-b border-[#f0f0f0] pl-[7px] text-[#777]">
        {["文件(F)", "编辑(E)", "格式(O)", "查看(V)", "帮助(H)"].map((m) => (
          <button key={m} className="leading-[18px]">{m}</button>
        ))}
      </div>
      <div className="flex min-h-0 flex-1">
        <textarea
          aria-label="记事本内容"
          readOnly
          value={NOTE}
          className="min-w-0 flex-1 resize-none overflow-hidden whitespace-pre pl-0.5 pt-5 font-['Inter','Noto_Sans_CJK_SC',sans-serif] text-[13px] leading-[19px] text-black outline-none"
        />
        <div className="flex w-[17px] flex-col items-center bg-[#f0f0f0]">
          <svg viewBox="0 0 8 5" className="my-2 h-[5px] w-2" fill="none" stroke="#444" strokeWidth="1.8"><path d="M1 4 L4 1 L7 4" /></svg>
          <span className="mt-3.5 w-[15px] flex-1 bg-[#cdcdcd]" />
          <svg viewBox="0 0 8 5" className="my-1.5 h-[5px] w-2" fill="none" stroke="#444" strokeWidth="1.8"><path d="M1 1 L4 4 L7 1" /></svg>
        </div>
      </div>
      <div className="flex h-[18px] shrink-0 whitespace-nowrap pl-[30px] leading-[20px] text-[#333]">
        <span className="w-[140px] border-l border-[#d8d8d8] pl-3">第 33 行，第 11 列</span>
        <span className="w-[50px] border-l border-[#d8d8d8] pl-2">80%</span>
        <span className="w-[120px] border-l border-[#d8d8d8] pl-2">Windows (CRLF)</span>
        <span className="border-l border-[#d8d8d8] pl-2">UTF-8</span>
      </div>
    </div>
  );
}

/* ---------- taskbar ---------- */

const SLOTS = [
  "w-1 bg-white h-0.5",
  "w-0 h-0.5",
  "w-4 h-0.5 bg-[#14283a]",
  "w-full h-full bg-[#a96a33]",
  "w-5 h-[3px] rounded-t bg-[#06e05f]",
  "w-[18px] h-0.5 bg-[#2c8a6b]",
  "w-3 h-[3px] rounded-t-full bg-[#1a8cf0]",
  "w-2 h-0.5 bg-[#5b6570]",
  "w-[18px] h-[3px] bg-[#8b929c]",
  "w-5 h-[3px] bg-[#dc2a10]",
  "w-3.5 h-[3px] rounded-t-full bg-[#ea4335]",
  "w-0 h-0.5",
  "w-3 h-[3px] rounded-t-full bg-[#dfe8f8]",
  "w-full h-full bg-[#566066]",
  "w-0 h-0.5",
  "w-[18px] h-0.5 bg-[#3b7fb5]",
];

const TaskIcons = () => (
  <div className="flex items-end pl-14">
    {SLOTS.map((s, i) => (
      <span key={i} className="flex h-2.5 w-[49px] items-end justify-center">
        <i className={s} />
      </span>
    ))}
  </div>
);

function Taskbar() {
  return (
    <div className="absolute inset-x-0 bottom-0 grid h-2.5 grid-cols-[1920fr_1828fr] overflow-hidden bg-[linear-gradient(90deg,#22323b,#28363c_30%,#2b2725_40%,#262a2e_48%,#22323b_52%,#25363c_80%,#2a2826_92%,#1c2a36)] text-xs text-white">
      <div className="flex justify-between overflow-hidden">
        <TaskIcons />
        <span className="mr-[18px] mt-1 leading-4">16:49</span>
      </div>
      <div className="flex justify-between overflow-hidden">
        <TaskIcons />
        <span className="w-2 overflow-hidden pt-1 leading-4">16:49</span>
      </div>
    </div>
  );
}

/* ---------- page ---------- */

const STYLES_A: StyleItem[] = [
  { sample: "AaBb(", name: "↲ 标题", cls: "text-xl font-bold font-['Liberation_Sans',sans-serif]" },
  { sample: "AaBbCcI", name: "↲ 标题 3", cls: "text-base font-['Liberation_Serif',serif]" },
  { sample: "AaBbC(", name: "标题 5", cls: "text-lg font-['Liberation_Serif',serif]" },
  { sample: "AaBb(", name: "副标题", cls: "text-xl" },
  { sample: "AaBbCcDd", name: "强调", cls: "text-xs text-[#c00000]!" },
];

const STYLES_B: StyleItem[] = [
  { sample: "AaBbCcI", name: "无间隔", cls: "text-base font-['Liberation_Serif',serif]" },
  { sample: "AaBbCcDdI", name: "↲ 正文", cls: "text-xs font-['Liberation_Serif',serif]" },
  { sample: "AaBb(", name: "正文文本...", cls: "text-xl" },
  { sample: "一、", name: "标题 1", cls: "text-xl" },
  { sample: "（一）", name: "标题 2", cls: "text-lg" },
  { sample: "1.    AaB", name: "标题 3", cls: "text-sm font-bold font-['Liberation_Serif',serif]" },
  { sample: "1.1.    Aa", name: "标题 4", cls: "text-sm font-bold font-['Liberation_Serif',serif]", on: true },
  { sample: "1.1.1.", name: "标题 5", cls: "text-base font-bold font-['Liberation_Serif',serif]" },
  { sample: "1.1.1.1.", name: "标题 6", cls: "text-base font-bold font-['Liberation_Serif',serif]" },
  { sample: "1.1.1.1.", name: "标题 7", cls: "text-base font-bold font-['Liberation_Serif',serif]" },
  { sample: "1.1.1.1.", name: "标题 8", cls: "text-base font-['Liberation_Serif',serif]" },
  { sample: "1.1.1.1.1", name: "标题 9", cls: "text-base font-['Liberation_Serif',serif]" },
];

export default function App() {
  return (
    <main className={`relative grid h-screen grid-cols-[7px_1430fr_22px_462fr_6px_1821fr] grid-rows-[100%] overflow-hidden ${UI}`}>
      <div className="flex flex-col">
        <span className="h-[27px] bg-white" />
        <span className="h-[69px] bg-[#16294d]" />
        <span className="flex-1 bg-[#808080]" />
      </div>

      <WordTop title="GWDC-NB-2025-ZYGS-FJ-00009招标文件 [兼容模式]  -  Word" context size="8" styles={STYLES_A}>
        <LeftDocument />
        <StatusBar pages="第 39 页，共 83 页" words="37559 个字" access="辅助功能: 不可用" zoom="120%" pad="h-[21px] pl-1" />
      </WordTop>

      <div className="bg-[linear-gradient(180deg,#8a9a9c_0%,#5f95b8_4%,#b9bfb8_7%,#7fa3c0_12%,#9db4c6_20%,#7f9db3_28%,#4b5546_34%,#5a5236_38%,#c08a45_42%,#8a6232_48%,#d09548_54%,#4a3a2c_60%,#8f8a80_66%,#5e7480_70%,#6b553c_74%,#4c3220_82%,#3a2818_100%)]" />

      <Notepad />

      <div className="bg-[linear-gradient(180deg,#0f4c8c_0%,#10609f_20%,#3f8fb5_35%,#6fa0b5_42%,#2f7f95_55%,#3a4a4a_62%,#7f8f86_68%,#1b5560_75%,#0c4a63_100%)]" />

      <div className="h-full min-w-0 overflow-hidden pb-2.5">
        <div className="-mt-[15px] h-[calc(100%+15px)]">
          <WordTop title="西安展博投标文件  -  Word" clipped size="五号" styles={STYLES_B}>
            <RightDocument />
            <StatusBar pages="第 433 页，共 444 页" words="10/22007 个字" access="辅助功能: 调查" pad="h-[22px] pl-3" />
          </WordTop>
        </div>
      </div>

      <Taskbar />
    </main>
  );
}
